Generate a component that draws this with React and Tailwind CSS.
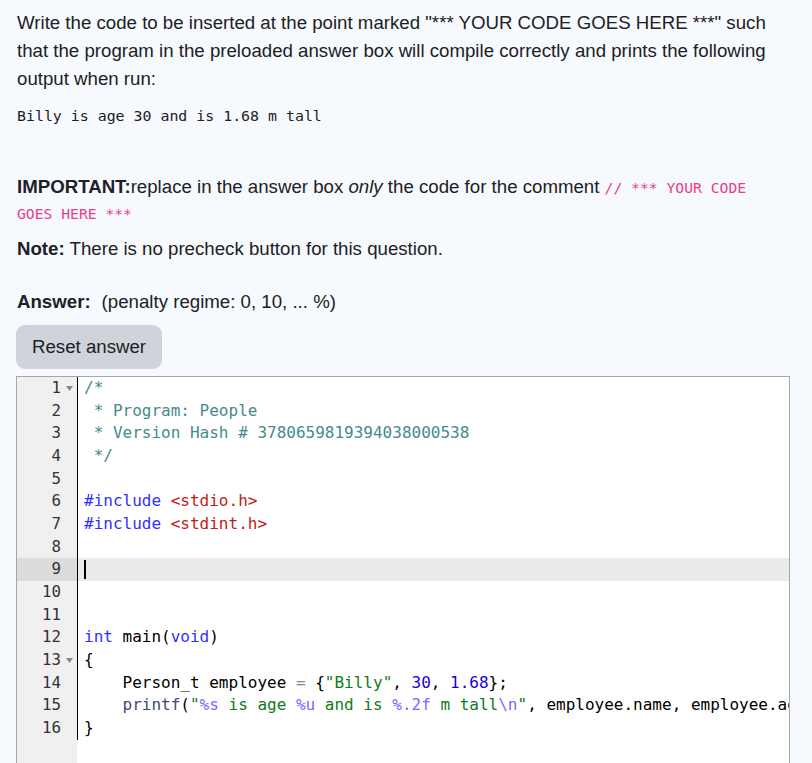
const mono = "font-['DejaVu_Sans_Mono',monospace]";

const C = {
  c: 'text-[#448c8c]',
  k: 'text-[#2f2fff]',
  inc: 'text-[#c41a16]',
  s: 'text-[#107a20]',
  n: 'text-[#1c00cf]',
  f: 'text-[#3c4c72]',
  fmt: 'text-[#7a6aff]',
  op: 'text-[#888888]',
};

const lines = [
  [['/*', C.c]],
  [[' * Program: People', C.c]],
  [[' * Version Hash # 3780659819394038000538', C.c]],
  [[' */', C.c]],
  [],
  [['#include', C.k], [' '], ['<stdio.h>', C.inc]],
  [['#include', C.k], [' '], ['<stdint.h>', C.inc]],
  [],
  [],
  [],
  [],
  [['int', C.k], [' main('], ['void', C.k], [')']],
  [['{']],
  [['    Person_t employee '], ['=', C.op], [' {'], ['"Billy"', C.s], [', '], ['30', C.n], [', '], ['1.68', C.n], ['};']],
  [
    ['    '], ['printf', C.f], ['('], ['"', C.s], ['%s', C.fmt], [' is age ', C.s], ['%u', C.fmt],
    [' and is ', C.s], ['%.2f', C.fmt], [' m tall', C.s], ['\\n', C.fmt], ['"', C.s],
    [', employee.name, employee.age, employee.height);'],
  ],
  [['}']],
];

const foldLines = [1, 13];
const activeLine = 9;

const FoldArrow = () => (
  <svg className="absolute right-[4px] top-[9px]" width="7" height="5" viewBox="0 0 7 5">
    <polygon points="0,0 7,0 3.5,5" fill="#8a8a8a" />
  </svg>
);

const Editor = () => (
  <div className="mt-[7px] flex h-[400px] w-[774px] overflow-hidden border border-[#a6a6a6] bg-white">
    <div className={`w-[60px] shrink-0 bg-[#f0f0f0] text-[15.8px] leading-[22.67px] text-[#333] ${mono}`}>
      {lines.map((_, i) => (
        <div
          key={i}
          className={`relative h-[22.67px] pr-[16px] text-right ${i + 1 === activeLine ? 'bg-[#dcdcdc]' : ''}`}
        >
          {i + 1}
          {foldLines.includes(i + 1) && <FoldArrow />}
        </div>
      ))}
    </div>
    <div className="min-w-0 flex-1">
      <div className={`border-l border-black text-[16px] leading-[22.67px] text-black ${mono}`}>
        {lines.map((tokens, i) => (
          <div
            key={i}
            className={`relative h-[22.67px] overflow-hidden whitespace-pre pl-[6px] ${i + 1 === activeLine ? 'bg-[#ebebeb]' : ''}`}
          >
            {i + 1 === activeLine && (
              <span className="absolute left-[6px] top-[2px] h-[19px] w-[2px] bg-black" />
            )}
            {tokens.map(([text, cls], j) => (
              <span key={j} className={cls}>{text}</span>
            ))}
          </div>
        ))}
      </div>
    </div>
  </div>
);

export default function App() {
  return (
    <div className="min-h-screen bg-[#f6f9fd] pl-[16px] pt-[9px] font-['Liberation_Sans',Arial,sans-serif] text-[18.67px] leading-[28px] text-[#1d2125]">
      <p className="pl-[1px]">
        Write the code to be inserted at the point marked "*** YOUR CODE GOES HERE ***" such
        <br />
        that the program in the preloaded answer box will compile correctly and prints the following
        <br />
        output when run:
      </p>
      <pre className={`mt-[12px] pl-[1px] text-[14.9px] leading-[22px] text-[#1d2125] ${mono}`}>
        Billy is age 30 and is 1.68 m tall
      </pre>
      <p className="mt-[47px] pl-[1px] leading-[25px]">
        <b>IMPORTANT:</b>replace in the answer box <i>only</i> the code for the comment{' '}
        <code className={`text-[14.7px] text-[#e83e8c] ${mono}`}>// *** YOUR CODE</code>
        <br />
        <code className={`text-[14.7px] text-[#e83e8c] ${mono}`}>GOES HERE ***</code>
      </p>
      <p className="mt-[9px] pl-[1px]">
        <b>Note:</b> There is no precheck button for this question.
      </p>
      <p className="mt-[25px] pl-[1px]">
        <b>Answer:</b>
        <span className="ml-[11px]">(penalty regime: 0, 10, ... %)</span>
      </p>
      <button className="mt-[9px] h-[44px] rounded-[9px] bg-[#ced4da] px-[16px] text-[#1d2125]">
        Reset answer
      </button>
      <Editor />
    </div>
  );
}
